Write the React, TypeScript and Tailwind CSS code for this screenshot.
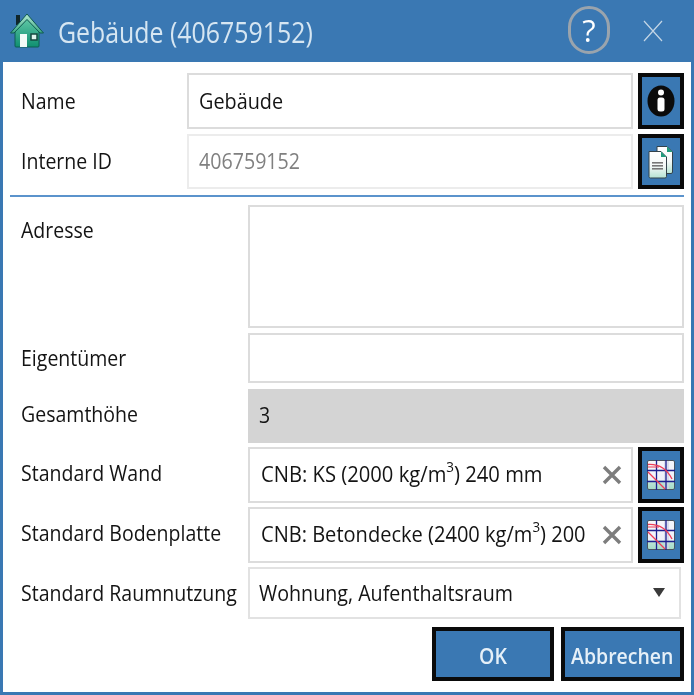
const labelCls = "text-[#141414] text-[21px] leading-none";

function Narrow({ children, className }: { children: React.ReactNode; className: string }) {
  return <span className={"inline-block origin-left whitespace-nowrap " + className}>{children}</span>;
}

function HomeIcon() {
  return (
    <svg width="34" height="36" viewBox="0 0 34 36" className="shrink-0">
      <defs>
        <linearGradient id="wall" x1="0" y1="0" x2="0" y2="1">
          <stop offset="0" stopColor="#5fc7a5" />
          <stop offset="1" stopColor="#0f8f70" />
        </linearGradient>
        <linearGradient id="roof" x1="0" y1="0" x2="0" y2="1">
          <stop offset="0" stopColor="#b6ead2" />
          <stop offset="1" stopColor="#39a884" />
        </linearGradient>
      </defs>
      <rect x="6" y="2" width="4" height="10" fill="#10262a" />
      <path d="M5 17 L5 33 Q5 34 6 34 L28 34 Q29 34 29 33 L29 17 L17 6 Z" fill="url(#wall)" stroke="#0d5f52" strokeWidth="1" />
      <path d="M0.5 20 L17 1 L33.5 20 L30 20 L17 6.5 L4 20 Z" fill="url(#roof)" stroke="#0e5a50" strokeWidth="1" />
      <rect x="10" y="21" width="7" height="13" fill="#f2fbf7" />
      <rect x="21" y="21" width="6" height="6" fill="#dff3ec" stroke="#14473f" strokeWidth="1.5" />
    </svg>
  );
}

function InfoIcon() {
  return (
    <svg width="28" height="32" viewBox="0 0 28 32">
      <ellipse cx="14" cy="16" rx="13.5" ry="15.5" fill="#0b0b0b" />
      <circle cx="14" cy="7.5" r="3" fill="#fff" />
      <rect x="10.5" y="12.5" width="7" height="14" rx="2.5" fill="#fff" />
    </svg>
  );
}

function CopyIcon() {
  return (
    <svg width="26" height="34" viewBox="0 0 26 34">
      <defs>
        <linearGradient id="paper" x1="0" y1="0" x2="0" y2="1">
          <stop offset="0" stopColor="#ffffff" />
          <stop offset="0.55" stopColor="#f4f8f7" />
          <stop offset="1" stopColor="#b5e3d2" />
        </linearGradient>
      </defs>
      <path d="M9 1.5 H19 L24.5 7 V27 Q24.5 28.5 23 28.5 H9 Z" fill="url(#paper)" stroke="#33424a" strokeWidth="1" />
      <path d="M19 1.5 L24.5 7 H19 Z" fill="#1f9a7c" />
      <path d="M1 6.5 H13 L18.5 12 V31.5 Q18.5 33 17 33 H2.5 Q1 33 1 31.5 Z" fill="url(#paper)" stroke="#33424a" strokeWidth="1" />
      <path d="M13 6.5 L18.5 12 H13 Z" fill="#1f9a7c" />
      <rect x="4" y="17" width="11" height="1.6" fill="#777" />
      <rect x="4" y="20" width="11" height="1.6" fill="#777" />
      <rect x="4" y="23" width="11" height="1.6" fill="#777" />
    </svg>
  );
}

function GridIcon() {
  return (
    <svg width="28" height="30" viewBox="0 0 28 30">
      <defs>
        <linearGradient id="cell" x1="0" y1="0" x2="0" y2="1">
          <stop offset="0" stopColor="#f6f7fb" />
          <stop offset="0.68" stopColor="#eef0f8" />
          <stop offset="0.7" stopColor="#bfe6d8" />
          <stop offset="1" stopColor="#a5dbc8" />
        </linearGradient>
      </defs>
      <rect x="0.5" y="0.5" width="27" height="29" rx="1.5" fill="url(#cell)" stroke="#4a5560" strokeWidth="1" />
      <rect x="17" y="1" width="5" height="28" fill="#cfd4e6" opacity="0.7" />
      <path d="M0 10.5 H28 M0 21.5 H28 M9.5 0 V30 M19 0 V30" stroke="#1f1f8f" strokeWidth="1.3" fill="none" />
      <path d="M1 4.5 Q17 3.5 25 19" stroke="#ef3b57" strokeWidth="1.3" fill="none" />
      <path d="M1 12 L18 29" stroke="#ef3b57" strokeWidth="1.3" fill="none" />
      <path d="M1 7 H12" stroke="#ef3b57" strokeWidth="1" fill="none" />
    </svg>
  );
}

function ClearIcon() {
  return (
    <svg width="20" height="20" viewBox="0 0 20 20" className="shrink-0">
      <path d="M2 2 L18 18 M18 2 L2 18" stroke="#7d7d7d" strokeWidth="3.4" />
    </svg>
  );
}

function IconButton({ children, className }: { children: React.ReactNode; className: string }) {
  return (
    <div className={"w-[46px] shrink-0 bg-[#3a78b3] border-[4px] border-[#0a0a0a] flex items-center justify-center " + className}>
      {children}
    </div>
  );
}

function Sup3() {
  return <sup className="text-[14px] leading-none align-[3px]">3</sup>;
}

export default function App() {
  return (
    <div
      className="w-[694px] h-[695px] bg-[#3a78b3] flex flex-col overflow-hidden blur-[0.35px]"
      style={{ fontFamily: '"Open Sans", "Noto Sans", sans-serif' }}
    >
      <div className="h-[62px] shrink-0 flex items-center pl-[10px] pr-[31px]">
        <HomeIcon />
        <Narrow className="ml-[14px] text-[29px] leading-none text-[#d6e6f2] scale-x-[0.858]">Gebäude (406759152)</Narrow>
        <div className="ml-auto w-[42px] h-[48px] mr-[33px] mt-[-2px] rounded-full border-[3px] border-[#9aa4ad] flex items-center justify-center text-white text-[31px] leading-none">
          ?
        </div>
        <svg width="20" height="22" viewBox="0 0 20 22">
          <path d="M1 1 L19 21 M19 1 L1 21" stroke="#c4d6e6" strokeWidth="1.2" />
        </svg>
      </div>

      <div className="ml-[3px] mr-[3px] mb-[3px] flex-1 bg-white pt-[11px] pl-[7px] pr-[7px] flex flex-col">
        <div className="flex h-[56px] mb-[5px]">
          <div className={labelCls + " w-[177px] pl-[11px] pt-[18px]"}><Narrow className="scale-x-[0.93]">Name</Narrow></div>
          <div className="w-[446px] border-2 border-[#dcdcdc] flex items-center pl-[10px] pt-[2px] text-[21px] text-[#141414]"><Narrow className="scale-x-[0.944]">Gebäude</Narrow></div>
          <IconButton className="ml-[5px]"><InfoIcon /></IconButton>
        </div>
        <div className="flex h-[55px]">
          <div className={labelCls + " w-[177px] pl-[11px] pt-[17px]"}><Narrow className="scale-x-[0.93]">Interne ID</Narrow></div>
          <div className="w-[446px] border-2 border-[#ececec] flex items-center pl-[10px] text-[21px] text-[#808080]"><Narrow className="scale-x-[0.935]">406759152</Narrow></div>
          <IconButton className="ml-[5px]"><CopyIcon /></IconButton>
        </div>
        <div className="h-[2px] bg-[#5b93cc] mt-[6px] mb-[8px]" />

        <div className="flex h-[123px] mb-[5px]">
          <div className={labelCls + " w-[238px] pl-[11px] pt-[15px]"}><Narrow className="scale-x-[0.93]">Adresse</Narrow></div>
          <div className="flex-1 border-2 border-[#dcdcdc]" />
        </div>
        <div className="flex h-[50px] mb-[6px]">
          <div className={labelCls + " w-[238px] pl-[11px] pt-[15px]"}><Narrow className="scale-x-[0.93]">Eigentümer</Narrow></div>
          <div className="flex-1 border-2 border-[#dcdcdc]" />
        </div>
        <div className="flex h-[54px] mb-[4px]">
          <div className={labelCls + " w-[238px] pl-[11px] pt-[15px]"}><Narrow className="scale-x-[0.93]">Gesamthöhe</Narrow></div>
          <div className="flex-1 bg-[#d4d4d4] flex items-center pl-[11px] text-[21px] text-[#141414]"><Narrow className="scale-x-[0.93]">3</Narrow></div>
        </div>
        <div className="flex h-[56px] mb-[4px]">
          <div className={labelCls + " w-[238px] pl-[11px] pt-[16px]"}><Narrow className="scale-x-[0.93]">Standard Wand</Narrow></div>
          <div className="w-[385px] border-2 border-[#dcdcdc] flex items-center pl-[11px] pr-[9px] text-[21px] text-[#141414]">
            <span className="flex-1 w-0"><Narrow className="scale-x-[0.962]">CNB: KS (2000 kg/m<Sup3 />) 240 mm</Narrow></span>
            <ClearIcon />
          </div>
          <IconButton className="ml-[5px]"><GridIcon /></IconButton>
        </div>
        <div className="flex h-[56px] mb-[4px]">
          <div className={labelCls + " w-[238px] pl-[11px] pt-[16px]"}><Narrow className="scale-x-[0.93]">Standard Bodenplatte</Narrow></div>
          <div className="w-[385px] border-2 border-[#dcdcdc] flex items-center pl-[11px] pr-[9px] text-[21px] text-[#141414]">
            <span className="flex-1 w-0"><Narrow className="scale-x-[0.955]">CNB: Betondecke (2400 kg/m<Sup3 />) 200</Narrow></span>
            <ClearIcon />
          </div>
          <IconButton className="ml-[5px]"><GridIcon /></IconButton>
        </div>
        <div className="flex h-[52px] mb-[8px]">
          <div className={labelCls + " w-[238px] pl-[11px] pt-[16px]"}><Narrow className="scale-x-[0.93]">Standard Raumnutzung</Narrow></div>
          <div className="w-[433px] border-2 border-[#e2e2e2] flex items-center pl-[9px] pr-[14px] pt-[2px] text-[21px] text-[#141414]">
            <span className="flex-1"><Narrow className="scale-x-[0.937]">Wohnung, Aufenthaltsraum</Narrow></span>
            <svg width="12" height="9" viewBox="0 0 12 9" className="mt-[-4px]"><path d="M0 0 H12 L6 9 Z" fill="#3a3a3a" /></svg>
          </div>
        </div>
        <div className="flex justify-end gap-[7px]">
          <div className="w-[122px] h-[54px] pt-[5px] bg-[#3a78b3] border-[4px] border-[#0a0a0a] flex items-center justify-center text-[21px] font-semibold text-[#e6f0f8]"><span className="inline-block scale-x-[0.93]">OK</span></div>
          <div className="w-[123px] h-[54px] pt-[5px] bg-[#3a78b3] border-[4px] border-[#0a0a0a] flex items-center justify-center text-[21px] font-semibold text-[#e6f0f8] whitespace-nowrap"><span className="inline-block scale-x-[0.927]">Abbrechen</span></div>
        </div>
      </div>
    </div>
  );
}
